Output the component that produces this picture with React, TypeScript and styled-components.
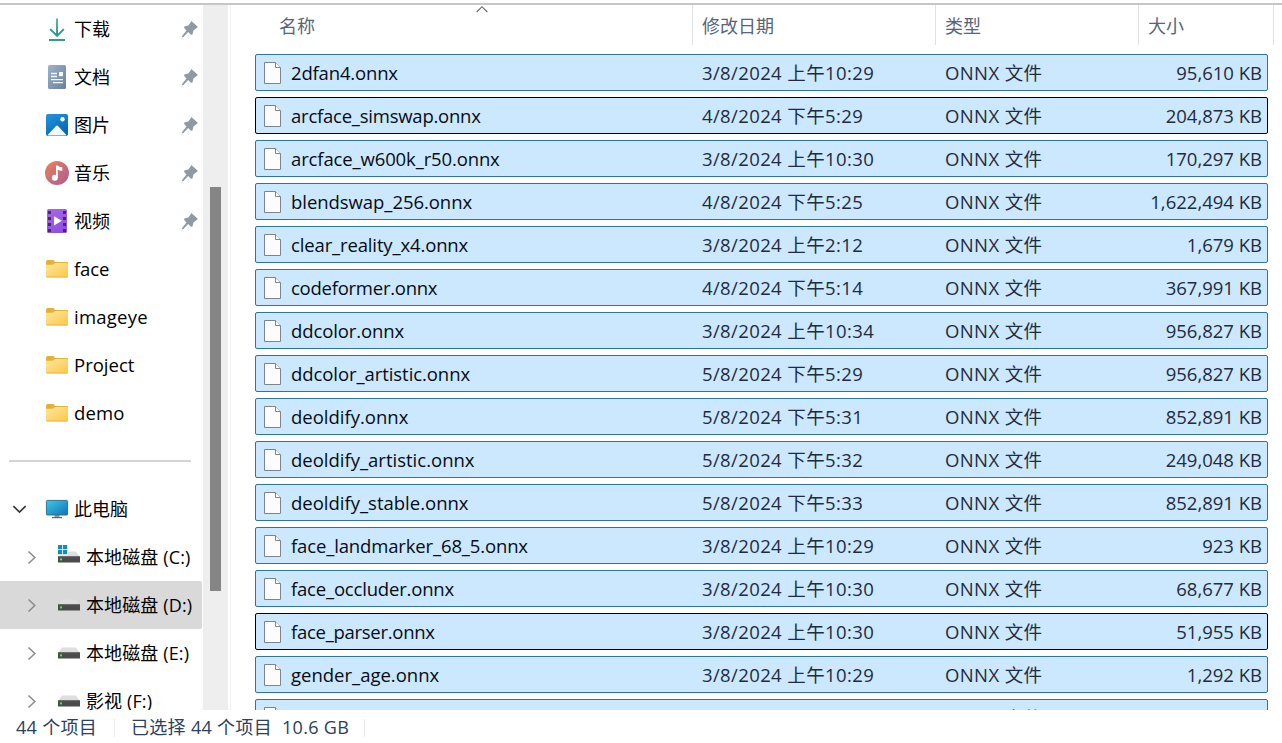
import React from "react";
import styled, { createGlobalStyle, css } from "styled-components";

const Global = createGlobalStyle`
  * { box-sizing: border-box; }
  body { margin: 0; background: #fff; overflow: hidden; }
`;

const Window = styled.div`
  width: 1282px;
  height: 743px;
  display: flex;
  flex-direction: column;
  background: #fff;
  color: #000;
  font-family: "Open Sans", "Noto Sans CJK SC", sans-serif;
  font-size: 18px;
  line-height: 24px;
  white-space: nowrap;
  overflow: hidden;
`;

const TopEdge = styled.div`
  height: 5px;
  flex: none;
  background: #fff;
  border-bottom: 2px solid #c6c6c9;
`;

const Body = styled.div`
  height: 705px;
  flex: none;
  display: flex;
  overflow: hidden;
`;

const Sidebar = styled.nav`
  width: 203px;
  height: 100%;
  flex: none;
  overflow: hidden;
`;

const NavRow = styled.div<{ $selected?: boolean; $level?: number }>`
  height: 48px;
  width: 202px;
  display: flex;
  align-items: center;
  padding-left: ${(p) => (p.$level === 2 ? 24 : 12)}px;
  border-radius: 0 2px 2px 0;
  background: ${(p) => (p.$selected ? "#d9d9d9" : "transparent")};
`;

const Arrow = styled.span`
  width: 15px;
  height: 48px;
  display: flex;
  align-items: center;
  justify-content: center;
`;

const NavIcon = styled.span`
  width: 26px;
  height: 26px;
  margin-left: 17px;
  margin-right: 4px;
  display: flex;
`;

const NavLabel = styled.span<{ $size?: number; $spacing?: number }>`
  flex: 1;
  font-size: ${(p) => p.$size ?? 18}px;
  letter-spacing: ${(p) => p.$spacing ?? 0}px;
`;

const PinSlot = styled.span`
  width: 18px;
  height: 18px;
  display: flex;
  margin-right: 3px;
`;

const SeparatorRow = styled.div`
  height: 48px;
  display: flex;
  align-items: center;
  padding: 0 12px 0 9px;
`;

const Separator = styled.div`
  flex: 1;
  height: 2px;
  background: #d4d4d4;
`;

const ScrollTrack = styled.div`
  width: 28px;
  height: 100%;
  flex: none;
  padding: 182px 0 0 7px;
  background: linear-gradient(to right, #eeeeee 25px, #fff 25px, #fff 27px, #f3f3f3 27px);
`;

const ScrollThumb = styled.div`
  width: 11px;
  height: 404px;
  background: #858585;
`;

const Main = styled.main`
  flex: 1;
  height: 100%;
  overflow: hidden;
`;

const columns = css`
  display: grid;
  align-items: center;
`;

const Header = styled.div`
  ${columns}
  grid-template-columns: 462px 243px 203px 135px;
  height: 40px;
  color: #56657c;
`;

const HeaderCell = styled.div<{ $first?: boolean }>`
  height: 40px;
  display: flex;
  align-items: center;
  padding-left: ${(p) => (p.$first ? 48 : 9)}px;
  padding-top: 1px;
  border-right: 1px solid #e2e2e2;
`;

const SortMark = styled.span`
  align-self: flex-start;
  height: 8px;
  width: 12px;
  margin-left: 161px;
  margin-top: -1px;
  display: flex;
`;

const Rows = styled.div`
  padding: 9px 14px 0 24px;
  display: flex;
  flex-direction: column;
  gap: 6px;
`;

const FileRow = styled.div<{ $focused?: boolean }>`
  ${columns}
  grid-template-columns: 35px 411px 243px 1fr 130px;
  height: 37px;
  padding-right: 5px;
  border: 1px solid ${(p) => (p.$focused ? "#000" : "#2d7699")};
  border-radius: 2px;
  background: #cce8ff;
  font-size: 18.5px;
`;

const FileGlyph = styled.span`
  display: flex;
  padding-left: 7px;
`;

const FileName = styled.span<{ $spacing: number }>`
  color: #060c14;
  letter-spacing: ${(p) => p.$spacing}px;
`;

const Detail = styled.span`
  color: #1f2c3d;
  letter-spacing: 0.38px;
`;

const Size = styled(Detail)`
  text-align: right;
  letter-spacing: 0;
`;

const StatusBar = styled.footer`
  height: 33px;
  display: flex;
  align-items: flex-start;
  padding: 5px 0 0 16px;
  color: #2a4160;
  letter-spacing: 0.3px;
`;

const StatusItem = styled.span<{ $width: number; $indent?: number }>`
  width: ${(p) => p.$width}px;
  padding-left: ${(p) => p.$indent ?? 0}px;
`;

const StatusDivider = styled.span`
  width: 1px;
  height: 18px;
  margin-top: 4px;
  background: #ebebeb;
`;

const Pin = () => (
  <svg width="18" height="18" viewBox="0 0 18 18">
    <path d="M10.6 1.2 16.5 6.6Q17 8 15.2 8.2L12.4 10.4 11.6 13.9Q10.8 15.4 9.7 14.4L7.2 12 2.4 17 1 17.2 1.2 15.8 5.6 10.6 3.3 8.2Q2.6 7 4 6.3L7.4 5.6 9.5 2.4Q9.7 1 10.6 1.2Z" fill="#8f9aa6" />
  </svg>
);

const DownloadIcon = () => (
  <svg width="26" height="26" viewBox="0 0 26 26" fill="none" strokeWidth="1.9">
    <defs>
      <linearGradient id="dl" x1="0" y1="0" x2="0" y2="1">
        <stop offset="0" stopColor="#45b78f" />
        <stop offset="1" stopColor="#168b82" />
      </linearGradient>
    </defs>
    <path d="M12.1 2.5h1.8v17h-1.8z" fill="url(#dl)" />
    <path d="M6.2 13.2 13 20 19.8 13.2" stroke="#2a9d8b" />
    <path d="M5 24h16" stroke="#239686" />
  </svg>
);

const DocumentIcon = () => (
  <svg width="26" height="26" viewBox="0 0 26 26">
    <defs>
      <linearGradient id="doc" x1="0" y1="0" x2="1" y2="1">
        <stop offset="0" stopColor="#9eb4cb" />
        <stop offset="1" stopColor="#687e9d" />
      </linearGradient>
    </defs>
    <rect x="4" y="1" width="18" height="24" rx="1.5" fill="url(#doc)" />
    <path d="M7 9.5h6M7 12.5h6M7 15.6h12M9 18.6h10" stroke="#f3f7fb" strokeWidth="1.4" />
    <rect x="15" y="8" width="4" height="4.2" fill="#fff" />
  </svg>
);

const PictureIcon = () => (
  <svg width="26" height="26" viewBox="0 0 26 26">
    <defs>
      <linearGradient id="pic" x1="0" y1="0" x2="0.6" y2="1">
        <stop offset="0" stopColor="#2596dc" />
        <stop offset="1" stopColor="#0567b5" />
      </linearGradient>
    </defs>
    <rect x="2" y="2" width="22" height="22" rx="2" fill="url(#pic)" />
    <path d="M3.6 23 11.8 14.2Q13 13 14.2 14.2L22.4 23Q21.8 23.6 21 23.6H5Q4.2 23.6 3.6 23Z" fill="#f3faff" />
    <circle cx="18.5" cy="7.2" r="2.2" fill="#f5fbff" />
  </svg>
);

const MusicIcon = () => (
  <svg width="26" height="26" viewBox="0 0 26 26">
    <defs>
      <linearGradient id="mus" x1="0" y1="0" x2="1" y2="1">
        <stop offset="0" stopColor="#ec8158" />
        <stop offset="1" stopColor="#a95b96" />
      </linearGradient>
    </defs>
    <circle cx="13" cy="13" r="12" fill="url(#mus)" />
    <circle cx="10.8" cy="17.7" r="3" fill="#fff" />
    <path d="M12 5.5h1.8Q14.8 7 18.3 7.2V10.8Q15.2 10.8 13.8 9.6V18H12Z" fill="#fff" />
  </svg>
);

const VideoIcon = () => (
  <svg width="26" height="26" viewBox="0 0 26 26">
    <defs>
      <linearGradient id="vid" x1="0" y1="0" x2="0.4" y2="1">
        <stop offset="0" stopColor="#a868e2" />
        <stop offset="1" stopColor="#9150e4" />
      </linearGradient>
    </defs>
    <rect x="3" y="1" width="20" height="24" rx="1.6" fill="url(#vid)" />
    {[3, 9, 15, 21].map((y) => (
      <g key={y} fill="#46257c">
        <rect x="4" y={y} width="3" height="3" />
        <rect x="19" y={y} width="3" height="3" />
      </g>
    ))}
    <path d="M10 8.2 17.8 12.8 10 17.4Z" fill="#fff" />
  </svg>
);

const FolderIcon = () => (
  <svg width="26" height="26" viewBox="0 0 26 26">
    <defs>
      <linearGradient id="fol" x1="0" y1="0" x2="1" y2="1">
        <stop offset="0" stopColor="#ffe69c" />
        <stop offset="1" stopColor="#fac84a" />
      </linearGradient>
    </defs>
    <path d="M2 5.5Q2 4 3.4 4H8.6Q9.6 4 10.4 5.2L11 6H23Q24 6 24 7V12H2Z" fill="#e4b233" />
    <path d="M2 8.8H8.8L10.8 7H23Q24 7 24 8V20.5Q24 21.4 23 21.4H3Q2 21.4 2 20.5Z" fill="url(#fol)" />
    <path d="M2.4 21H23.6" stroke="#dcb04a" strokeWidth="0.8" />
  </svg>
);

const ComputerIcon = () => (
  <svg width="26" height="26" viewBox="0 0 26 26">
    <defs>
      <linearGradient id="pc" x1="0" y1="0" x2="1" y2="1">
        <stop offset="0" stopColor="#3cc8e4" />
        <stop offset="1" stopColor="#1272ba" />
      </linearGradient>
    </defs>
    <path d="M10.5 19h5v2.6h-5z" fill="#8fa0ab" />
    <path d="M8 21.6h10" stroke="#59656d" strokeWidth="1.2" />
    <rect x="2.4" y="4.4" width="21.2" height="14.6" rx="1" fill="url(#pc)" stroke="#2b6784" strokeWidth="0.9" />
  </svg>
);

const DriveIcon = ({ system }: { system?: boolean }) => (
  <svg width="26" height="26" viewBox="0 0 26 26">
    <path d="M6 7.4H20L23.5 12.5H2.5Z" fill="#dedede" />
    <rect x="2" y="12" width="22" height="6.6" rx="0.6" fill="#4b4b4b" />
    <path d="M2 12.6h22" stroke="#6b6b6b" strokeWidth="1.2" />
    <rect x="4" y="14.4" width="2" height="2" fill="#50e35c" />
    {system && (
      <>
        <rect x="1" y="0" width="11" height="11.4" fill="#fff" />
        <path d="M2 1h4.2v4.2H2zM7 1h4.2v4.2H7zM2 6.1h4.2v4.2H2zM7 6.1h4.2v4.2H7z" fill="#168bbb" />
      </>
    )}
  </svg>
);

const ChevronDown = () => (
  <svg width="15" height="15" viewBox="0 0 15 15" fill="none" stroke="#333" strokeWidth="1.6">
    <path d="M1.4 4.1 7.5 10.1 13.6 4.1" />
  </svg>
);

const ChevronRight = () => (
  <svg width="15" height="15" viewBox="0 0 15 15" fill="none" stroke="#8a8a8a" strokeWidth="1.5">
    <path d="M4.5 1.5 10.8 7.5 4.5 13.5" />
  </svg>
);

const SortUp = () => (
  <svg width="12" height="8" viewBox="0 0 12 8" fill="none" stroke="#666" strokeWidth="1.1">
    <path d="M0.7 7 6 1.7 11.3 7" />
  </svg>
);

const BlankFile = () => (
  <svg width="19" height="24" viewBox="0 0 19 24">
    <path d="M1.5 1.5H12.5L17.5 6.5V22.5H1.5Z" fill="#fcfcfc" stroke="#7d858c" />
    <path d="M12.5 1.5V6.5H17.5" fill="#fff" stroke="#7d858c" />
  </svg>
);

type NavEntry = { label: string; icon: React.ReactNode; pinned?: boolean; size?: number; spacing?: number };

const quickAccess: NavEntry[] = [
  { label: "下载", icon: <DownloadIcon />, pinned: true },
  { label: "文档", icon: <DocumentIcon />, pinned: true },
  { label: "图片", icon: <PictureIcon />, pinned: true },
  { label: "音乐", icon: <MusicIcon />, pinned: true },
  { label: "视频", icon: <VideoIcon />, pinned: true },
  { label: "face", icon: <FolderIcon />, size: 18.5, spacing: -0.1 },
  { label: "imageye", icon: <FolderIcon />, size: 18.5, spacing: 0.25 },
  { label: "Project", icon: <FolderIcon />, size: 18.5 },
  { label: "demo", icon: <FolderIcon />, size: 18.5, spacing: 0.15 },
];

const drives = [
  { label: "本地磁盘 (C:)", system: true },
  { label: "本地磁盘 (D:)", selected: true },
  { label: "本地磁盘 (E:)" },
  { label: "影视 (F:)" },
];

type FileEntry = { name: string; spacing: number; date: string; size: string; focused?: boolean };

const files: FileEntry[] = [
  { name: "2dfan4.onnx", spacing: -0.17, date: "3/8/2024 上午10:29", size: "95,610 KB" },
  { name: "arcface_simswap.onnx", spacing: -0.23, date: "4/8/2024 下午5:29", size: "204,873 KB", focused: true },
  { name: "arcface_w600k_r50.onnx", spacing: -0.13, date: "3/8/2024 上午10:30", size: "170,297 KB" },
  { name: "blendswap_256.onnx", spacing: -0.05, date: "4/8/2024 下午5:25", size: "1,622,494 KB" },
  { name: "clear_reality_x4.onnx", spacing: -0.14, date: "3/8/2024 上午2:12", size: "1,679 KB" },
  { name: "codeformer.onnx", spacing: -0.25, date: "4/8/2024 下午5:14", size: "367,991 KB" },
  { name: "ddcolor.onnx", spacing: -0.1, date: "3/8/2024 上午10:34", size: "956,827 KB" },
  { name: "ddcolor_artistic.onnx", spacing: -0.07, date: "5/8/2024 下午5:29", size: "956,827 KB" },
  { name: "deoldify.onnx", spacing: 0, date: "5/8/2024 下午5:31", size: "852,891 KB" },
  { name: "deoldify_artistic.onnx", spacing: 0, date: "5/8/2024 下午5:32", size: "249,048 KB" },
  { name: "deoldify_stable.onnx", spacing: 0, date: "5/8/2024 下午5:33", size: "852,891 KB" },
  { name: "face_landmarker_68_5.onnx", spacing: -0.14, date: "3/8/2024 上午10:29", size: "923 KB" },
  { name: "face_occluder.onnx", spacing: -0.19, date: "3/8/2024 上午10:30", size: "68,677 KB" },
  { name: "face_parser.onnx", spacing: -0.28, date: "3/8/2024 上午10:30", size: "51,955 KB", focused: true },
  { name: "gender_age.onnx", spacing: 0, date: "3/8/2024 上午10:29", size: "1,292 KB" },
];

export default function App() {
  return (
    <Window>
      <Global />
      <TopEdge />
      <Body>
        <Sidebar>
          {quickAccess.map((item) => (
            <NavRow key={item.label}>
              <Arrow />
              <NavIcon>{item.icon}</NavIcon>
              <NavLabel $size={item.size} $spacing={item.spacing}>
                {item.label}
              </NavLabel>
              {item.pinned && (
                <PinSlot>
                  <Pin />
                </PinSlot>
              )}
            </NavRow>
          ))}
          <SeparatorRow>
            <Separator />
          </SeparatorRow>
          <NavRow>
            <Arrow>
              <ChevronDown />
            </Arrow>
            <NavIcon>
              <ComputerIcon />
            </NavIcon>
            <NavLabel>此电脑</NavLabel>
          </NavRow>
          {drives.map((drive) => (
            <NavRow key={drive.label} $level={2} $selected={drive.selected}>
              <Arrow>
                <ChevronRight />
              </Arrow>
              <NavIcon>
                <DriveIcon system={drive.system} />
              </NavIcon>
              <NavLabel $spacing={0.12}>{drive.label}</NavLabel>
            </NavRow>
          ))}
        </Sidebar>
        <ScrollTrack>
          <ScrollThumb />
        </ScrollTrack>
        <Main>
          <Header>
            <HeaderCell $first>
              名称
              <SortMark>
                <SortUp />
              </SortMark>
            </HeaderCell>
            <HeaderCell>修改日期</HeaderCell>
            <HeaderCell>类型</HeaderCell>
            <HeaderCell>大小</HeaderCell>
          </Header>
          <Rows>
            {files.map((file) => (
              <FileRow key={file.name} $focused={file.focused}>
                <FileGlyph>
                  <BlankFile />
                </FileGlyph>
                <FileName $spacing={file.spacing}>{file.name}</FileName>
                <Detail>{file.date}</Detail>
                <Detail>ONNX 文件</Detail>
                <Size>{file.size}</Size>
              </FileRow>
            ))}
            <FileRow>
              <FileGlyph>
                <BlankFile />
              </FileGlyph>
              <span />
              <span />
              <Detail>ONNX 文件</Detail>
            </FileRow>
          </Rows>
        </Main>
      </Body>
      <StatusBar>
        <StatusItem $width={98}>44 个项目</StatusItem>
        <StatusDivider />
        <StatusItem $width={167} $indent={16}>
          已选择 44 个项目
        </StatusItem>
        <StatusItem $width={82}>10.6 GB</StatusItem>
        <StatusDivider />
      </StatusBar>
    </Window>
  );
}
